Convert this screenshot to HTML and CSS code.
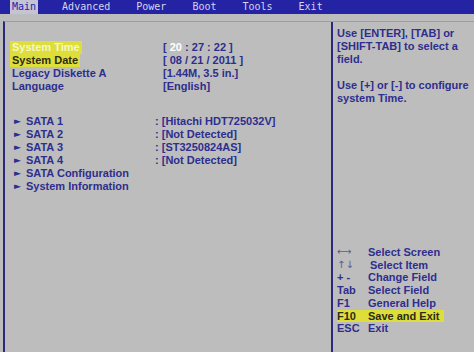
FILE: index.html
```html
<!DOCTYPE html>
<html lang="en">
<head>
    <meta charset="UTF-8">
    <title>BIOS Setup - Main</title>
    <link rel="stylesheet" href="styles.css">
</head>
<body>
    <div class="menubar">
        <span class="menu-item active">Main</span>
        <span class="menu-item">Advanced</span>
        <span class="menu-item">Power</span>
        <span class="menu-item">Boot</span>
        <span class="menu-item">Tools</span>
        <span class="menu-item">Exit</span>
    </div>

    <div class="screen">
        <div class="settings">
            <div class="group">
                <div class="row">
                    <span class="label hl hl-light">System Time</span>
                    <span class="value">[ <span class="cur">20</span> : 27 : 22 ]</span>
                </div>
                <div class="row">
                    <span class="label hl">System Date</span>
                    <span class="value">[ 08 / 21 / 2011 ]</span>
                </div>
                <div class="row">
                    <span class="label">Legacy Diskette A</span>
                    <span class="value">[1.44M, 3.5 in.]</span>
                </div>
                <div class="row">
                    <span class="label">Language</span>
                    <span class="value">[English]</span>
                </div>
            </div>

            <div class="group sub">
                <div class="row">
                    <span class="label"><span class="arrow">►</span>SATA 1</span>
                    <span class="value">: [Hitachi HDT725032V]</span>
                </div>
                <div class="row">
                    <span class="label"><span class="arrow">►</span>SATA 2</span>
                    <span class="value">: [Not Detected]</span>
                </div>
                <div class="row">
                    <span class="label"><span class="arrow">►</span>SATA 3</span>
                    <span class="value">: [ST3250824AS]</span>
                </div>
                <div class="row">
                    <span class="label"><span class="arrow">►</span>SATA 4</span>
                    <span class="value">: [Not Detected]</span>
                </div>
                <div class="row">
                    <span class="label"><span class="arrow">►</span>SATA Configuration</span>
                </div>
                <div class="row">
                    <span class="label"><span class="arrow">►</span>System Information</span>
                </div>
            </div>
        </div>

        <div class="help">
            <p>Use [ENTER], [TAB] or<br>[SHIFT-TAB] to select a<br>field.</p>
            <p>Use [+] or [-] to configure<br>system Time.</p>

            <div class="legend">
                <span class="key sym">⟷</span><span class="desc">Select Screen</span>
                <span class="key sym">↑↓</span><span class="desc shift">Select Item</span>
                <span class="key">+ -</span><span class="desc">Change Field</span>
                <span class="key">Tab</span><span class="desc">Select Field</span>
                <span class="key">F1</span><span class="desc">General Help</span>
                <span class="key hl">F10</span><span class="desc hl">Save and Exit</span>
                <span class="key">ESC</span><span class="desc">Exit</span>
            </div>
        </div>
    </div>
</body>
</html>
```

FILE: styles.css
```css
:root {
    --bios-blue: #2323a4;
    --panel: #bdbdbd;
    --ink: #2e2e8e;
    --line: #2a2a78;
    --yellow: #dede3a;
}

* {
    margin: 0;
    padding: 0;
    box-sizing: border-box;
}

body {
    width: 474px;
    height: 352px;
    overflow: hidden;
    background: var(--panel);
    font-family: "Liberation Sans", Arial, sans-serif;
    font-weight: bold;
    font-size: 11px;
    color: var(--ink);
    display: flex;
    flex-direction: column;
}

/* Top menu bar */
.menubar {
    height: 14px;
    background: var(--bios-blue);
    display: flex;
    gap: 22px;
    padding-left: 10px;
    font-family: "DejaVu Sans Mono", monospace;
    font-size: 10px;
    font-weight: normal;
    line-height: 14px;
    color: #d6d6ee;
}

.menu-item {
    padding: 0 2px;
}

.menu-item.active {
    background: #c4c4d6;
    color: var(--bios-blue);
}

/* Main frame */
.screen {
    flex: 1;
    margin-top: 7px;
    margin-left: 3px;
    border-top: 1px solid #9c9cae;
    border-left: 2px solid var(--line);
    display: grid;
    grid-template-columns: 328px 1fr;
}

.settings {
    padding: 19px 0 0 7px;
    border-right: 2px solid var(--line);
}

.group {
    line-height: 13px;
}

.group.sub {
    margin-top: 22px;
}

.row {
    display: grid;
    grid-template-columns: 151px auto;
    height: 13px;
}

.group.sub .row {
    grid-template-columns: 143px auto;
}

.label {
    justify-self: start;
}

.arrow {
    display: inline-block;
    width: 14px;
    padding-left: 2px;
    font-size: 9px;
    line-height: 10px;
    vertical-align: top;
    margin-top: 1px;
    font-family: "DejaVu Sans", sans-serif;
}

.hl {
    background: var(--yellow);
    color: #2c2c12;
    padding: 0 2px;
    margin-left: -2px;
}

.hl-light {
    color: #f6f6c8;
}

.cur {
    color: #ffffff;
}

/* Help column */
.help {
    padding: 5px 0 17px 4px;
    line-height: 13px;
    display: flex;
    flex-direction: column;
}

.help p + p {
    margin-top: 13px;
}

.legend {
    margin-top: auto;
    display: grid;
    grid-template-columns: 31px auto;
    line-height: 12.7px;
}

.legend .desc {
    justify-self: start;
}

.legend .desc.hl {
    margin-left: 0;
    padding: 0 4px 0 0;
}

.legend .key.hl {
    margin-left: 0;
    padding: 0;
}

.sym {
    font-family: "DejaVu Sans", sans-serif;
    font-weight: normal;
    font-size: 10px;
    color: #5a5a9a;
}

.shift {
    margin-left: 2px;
}
```
